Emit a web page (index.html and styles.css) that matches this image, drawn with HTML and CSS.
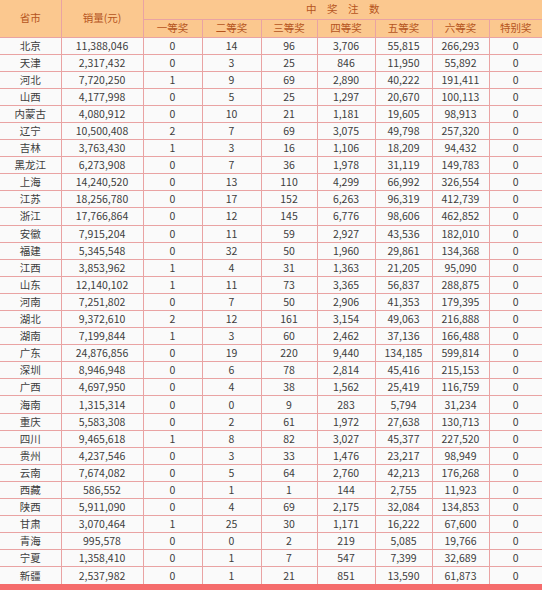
FILE: index.html
```html
<!DOCTYPE html>
<html lang="zh-CN">
<head>
<meta charset="utf-8">
<title>中奖注数</title>
<link rel="stylesheet" href="styles.css">
</head>
<body>
<div class="page">
<table class="stats">
<colgroup>
<col class="c-prov"><col class="c-sales"><col class="c-p1"><col class="c-p2"><col class="c-p3"><col class="c-p4"><col class="c-p5"><col class="c-p6"><col class="c-sp">
</colgroup>
<thead>
<tr class="h1">
<th rowspan="2">省市</th>
<th rowspan="2">销量(元)</th>
<th colspan="7" class="group">中奖注数</th>
</tr>
<tr class="h2">
<th>一等奖</th><th>二等奖</th><th>三等奖</th><th>四等奖</th><th>五等奖</th><th>六等奖</th><th>特别奖</th>
</tr>
</thead>
<tbody>
<tr><td>北京</td><td>11,388,046</td><td>0</td><td>14</td><td>96</td><td>3,706</td><td>55,815</td><td>266,293</td><td>0</td></tr>
<tr><td>天津</td><td>2,317,432</td><td>0</td><td>3</td><td>25</td><td>846</td><td>11,950</td><td>55,892</td><td>0</td></tr>
<tr><td>河北</td><td>7,720,250</td><td>1</td><td>9</td><td>69</td><td>2,890</td><td>40,222</td><td>191,411</td><td>0</td></tr>
<tr><td>山西</td><td>4,177,998</td><td>0</td><td>5</td><td>25</td><td>1,297</td><td>20,670</td><td>100,113</td><td>0</td></tr>
<tr><td>内蒙古</td><td>4,080,912</td><td>0</td><td>10</td><td>21</td><td>1,181</td><td>19,605</td><td>98,913</td><td>0</td></tr>
<tr><td>辽宁</td><td>10,500,408</td><td>2</td><td>7</td><td>69</td><td>3,075</td><td>49,798</td><td>257,320</td><td>0</td></tr>
<tr><td>吉林</td><td>3,763,430</td><td>1</td><td>3</td><td>16</td><td>1,106</td><td>18,209</td><td>94,432</td><td>0</td></tr>
<tr><td>黑龙江</td><td>6,273,908</td><td>0</td><td>7</td><td>36</td><td>1,978</td><td>31,119</td><td>149,783</td><td>0</td></tr>
<tr><td>上海</td><td>14,240,520</td><td>0</td><td>13</td><td>110</td><td>4,299</td><td>66,992</td><td>326,554</td><td>0</td></tr>
<tr><td>江苏</td><td>18,256,780</td><td>0</td><td>17</td><td>152</td><td>6,263</td><td>96,319</td><td>412,739</td><td>0</td></tr>
<tr><td>浙江</td><td>17,766,864</td><td>0</td><td>12</td><td>145</td><td>6,776</td><td>98,606</td><td>462,852</td><td>0</td></tr>
<tr><td>安徽</td><td>7,915,204</td><td>0</td><td>11</td><td>59</td><td>2,927</td><td>43,536</td><td>182,010</td><td>0</td></tr>
<tr><td>福建</td><td>5,345,548</td><td>0</td><td>32</td><td>50</td><td>1,960</td><td>29,861</td><td>134,368</td><td>0</td></tr>
<tr><td>江西</td><td>3,853,962</td><td>1</td><td>4</td><td>31</td><td>1,363</td><td>21,205</td><td>95,090</td><td>0</td></tr>
<tr><td>山东</td><td>12,140,102</td><td>1</td><td>11</td><td>73</td><td>3,365</td><td>56,837</td><td>288,875</td><td>0</td></tr>
<tr><td>河南</td><td>7,251,802</td><td>0</td><td>7</td><td>50</td><td>2,906</td><td>41,353</td><td>179,395</td><td>0</td></tr>
<tr><td>湖北</td><td>9,372,610</td><td>2</td><td>12</td><td>161</td><td>3,154</td><td>49,063</td><td>216,888</td><td>0</td></tr>
<tr><td>湖南</td><td>7,199,844</td><td>1</td><td>3</td><td>60</td><td>2,462</td><td>37,136</td><td>166,488</td><td>0</td></tr>
<tr><td>广东</td><td>24,876,856</td><td>0</td><td>19</td><td>220</td><td>9,440</td><td>134,185</td><td>599,814</td><td>0</td></tr>
<tr><td>深圳</td><td>8,946,948</td><td>0</td><td>6</td><td>78</td><td>2,814</td><td>45,416</td><td>215,153</td><td>0</td></tr>
<tr><td>广西</td><td>4,697,950</td><td>0</td><td>4</td><td>38</td><td>1,562</td><td>25,419</td><td>116,759</td><td>0</td></tr>
<tr><td>海南</td><td>1,315,314</td><td>0</td><td>0</td><td>9</td><td>283</td><td>5,794</td><td>31,234</td><td>0</td></tr>
<tr><td>重庆</td><td>5,583,308</td><td>0</td><td>2</td><td>61</td><td>1,972</td><td>27,638</td><td>130,713</td><td>0</td></tr>
<tr><td>四川</td><td>9,465,618</td><td>1</td><td>8</td><td>82</td><td>3,027</td><td>45,377</td><td>227,520</td><td>0</td></tr>
<tr><td>贵州</td><td>4,237,546</td><td>0</td><td>3</td><td>33</td><td>1,476</td><td>23,217</td><td>98,949</td><td>0</td></tr>
<tr><td>云南</td><td>7,674,082</td><td>0</td><td>5</td><td>64</td><td>2,760</td><td>42,213</td><td>176,268</td><td>0</td></tr>
<tr><td>西藏</td><td>586,552</td><td>0</td><td>1</td><td>1</td><td>144</td><td>2,755</td><td>11,923</td><td>0</td></tr>
<tr><td>陕西</td><td>5,911,090</td><td>0</td><td>4</td><td>69</td><td>2,175</td><td>32,084</td><td>134,853</td><td>0</td></tr>
<tr><td>甘肃</td><td>3,070,464</td><td>1</td><td>25</td><td>30</td><td>1,171</td><td>16,222</td><td>67,600</td><td>0</td></tr>
<tr><td>青海</td><td>995,578</td><td>0</td><td>0</td><td>2</td><td>219</td><td>5,085</td><td>19,766</td><td>0</td></tr>
<tr><td>宁夏</td><td>1,358,410</td><td>0</td><td>1</td><td>7</td><td>547</td><td>7,399</td><td>32,689</td><td>0</td></tr>
<tr><td>新疆</td><td>2,537,982</td><td>0</td><td>1</td><td>21</td><td>851</td><td>13,590</td><td>61,873</td><td>0</td></tr>
</tbody>
</table>
<div class="band"></div>
</div>
</body>
</html>
```

FILE: styles.css
```css
html, body {
  margin: 0;
  padding: 0;
  background: #ffffff;
}

.page {
  width: 542px;
  overflow: hidden;
}

.stats {
  width: 542px;
  table-layout: fixed;
  border-collapse: collapse;
  font-family: "Noto Sans CJK SC", "Noto Sans", sans-serif;
  font-size: 10.5px;
  line-height: 10px;
}

.c-prov { width: 61px; }
.c-sales { width: 82px; }
.c-p1 { width: 59px; }
.c-p2 { width: 59px; }
.c-p3 { width: 56px; }
.c-p4 { width: 58px; }
.c-p5 { width: 57px; }
.c-p6 { width: 57px; }
.c-sp { width: 53px; }

.stats th,
.stats td {
  border: 1px solid #e9a3a3;
  padding: 0;
  text-align: center;
  vertical-align: middle;
  white-space: nowrap;
}

.stats tr > :first-child { border-left: none; }
.stats tr > :last-child { border-right: none; }
.stats thead tr.h2 > :first-child { border-left: 1px solid #e9a3a3; }
.stats thead tr.h2 > :last-child { border-right: none; }
.stats thead tr.h1 th { border-top: none; }

.stats th {
  background: #fbc88f;
  color: #b5541d;
  font-weight: normal;
}

.stats .h1 { height: 19px; }
.stats .h2 { height: 18px; }

.stats .group {
  letter-spacing: 10.5px;
  padding-left: 10.5px;
}

.stats tbody tr { height: 17.1px; }

.stats td {
  background: #fafafa;
  color: #3d3d3d;
}

.stats tbody tr:last-child td { border-bottom: none; }

.band {
  height: 8px;
  background: #f56c6c;
}
```
